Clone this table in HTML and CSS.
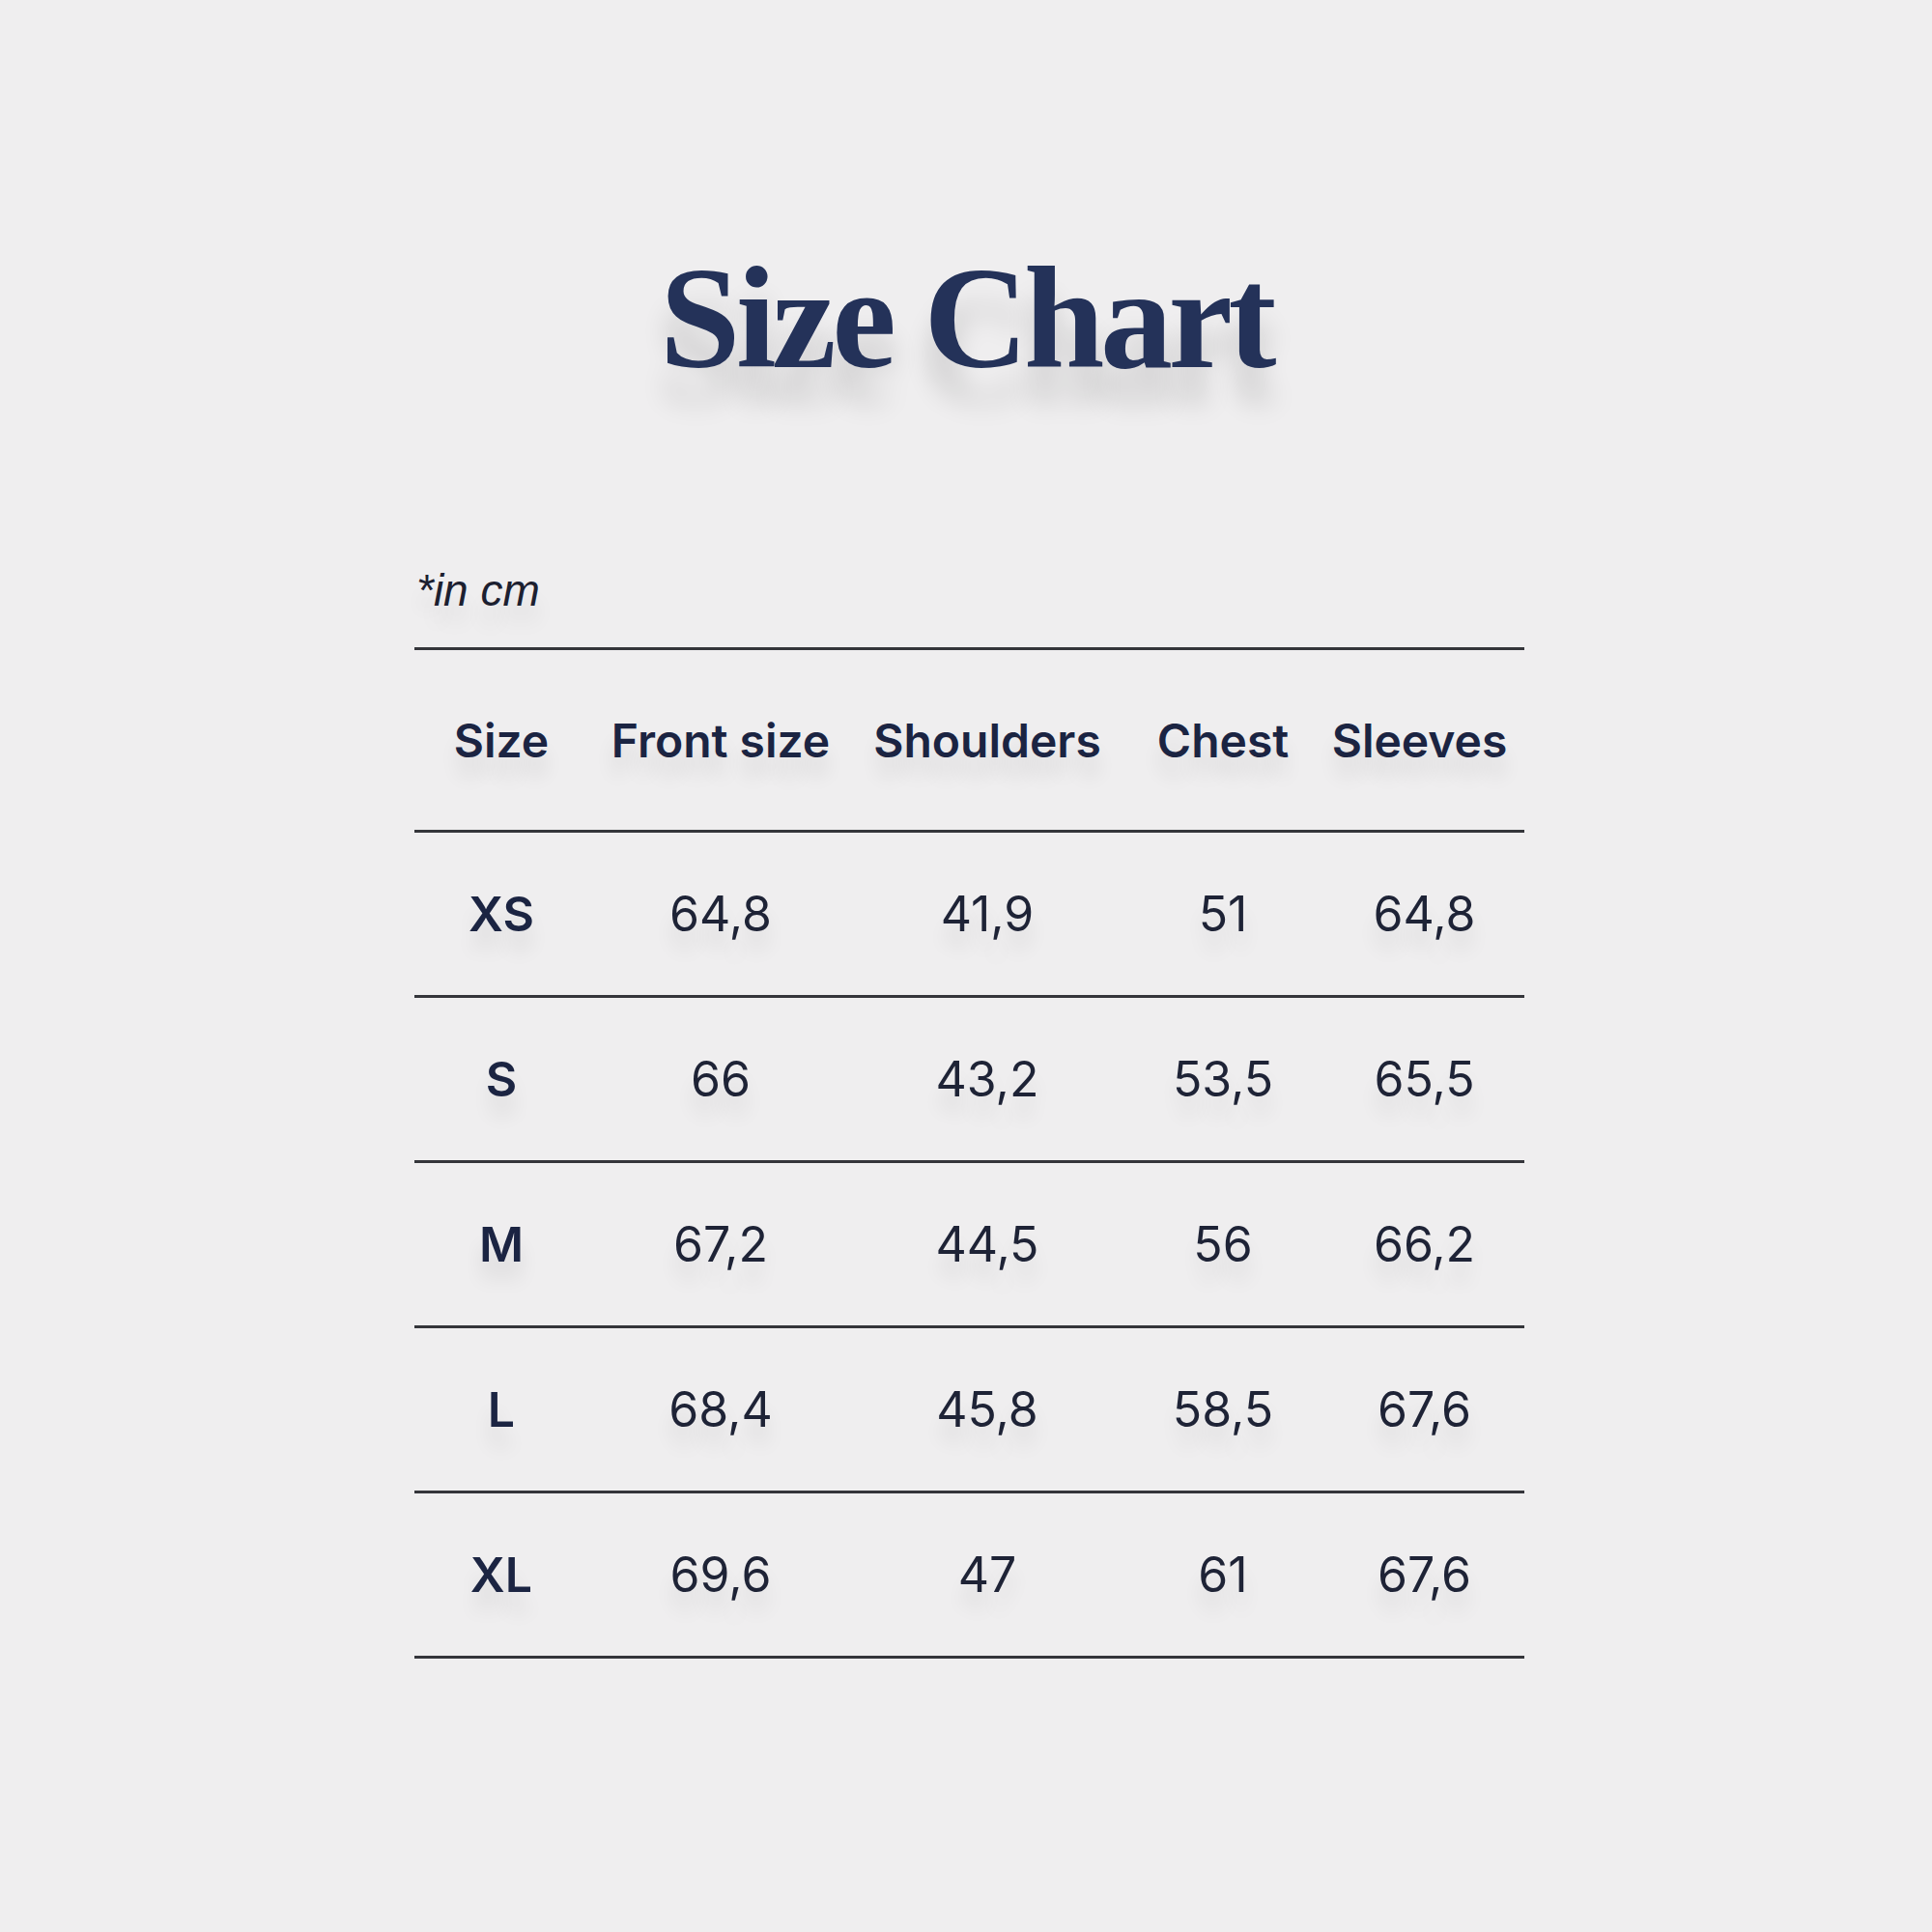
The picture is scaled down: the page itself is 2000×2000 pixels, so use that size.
FILE: index.html
```html
<!DOCTYPE html>
<html>
<head>
<meta charset="utf-8">
<link rel="stylesheet" href="styles.css">
</head>
<body>
<main class="page">
  <h1 class="title">Size Chart</h1>
  <section class="chart">
    <p class="note">*in cm</p>
    <div class="table">
      <div class="row head">
        <div class="cell">Size</div>
        <div class="cell">Front size</div>
        <div class="cell">Shoulders</div>
        <div class="cell">Chest</div>
        <div class="cell">Sleeves</div>
      </div>
      <div class="row">
        <div class="cell size">XS</div>
        <div class="cell">64,8</div>
        <div class="cell">41,9</div>
        <div class="cell">51</div>
        <div class="cell">64,8</div>
      </div>
      <div class="row">
        <div class="cell size">S</div>
        <div class="cell">66</div>
        <div class="cell">43,2</div>
        <div class="cell">53,5</div>
        <div class="cell">65,5</div>
      </div>
      <div class="row">
        <div class="cell size">M</div>
        <div class="cell">67,2</div>
        <div class="cell">44,5</div>
        <div class="cell">56</div>
        <div class="cell">66,2</div>
      </div>
      <div class="row">
        <div class="cell size">L</div>
        <div class="cell">68,4</div>
        <div class="cell">45,8</div>
        <div class="cell">58,5</div>
        <div class="cell">67,6</div>
      </div>
      <div class="row last">
        <div class="cell size">XL</div>
        <div class="cell">69,6</div>
        <div class="cell">47</div>
        <div class="cell">61</div>
        <div class="cell">67,6</div>
      </div>
    </div>
  </section>
</main>
</body>
</html>
```
FILE: styles.css
```css
html, body {
  margin: 0;
  padding: 0;
  background: #efeeef;
}
body {
  width: 2000px;
  height: 2000px;
  font-family: Inter, "Liberation Sans", sans-serif;
  color: #1d2540;
}
.page {
  display: flex;
  flex-direction: column;
  align-items: center;
  padding-top: 254px;
}
.title {
  margin: 0;
  font-family: "Liberation Serif", serif;
  font-weight: 700;
  font-size: 150px;
  line-height: 150px;
  letter-spacing: -4.5px;
  color: #243259;
  text-shadow: 0 36px 28px rgba(0, 0, 0, 0.14);
}
.chart {
  width: 1149px;
  margin-top: 184px;
  margin-left: 7px;
}
.note {
  margin: 0 0 36px 2px;
  font-family: "Liberation Sans", Arial, sans-serif;
  font-style: italic;
  font-size: 46px;
  line-height: 46px;
  color: #1c2030;
  text-shadow: 0 20px 20px rgba(0, 0, 0, 0.09);
}
.table {
  display: flex;
  flex-direction: column;
}
.row {
  display: grid;
  grid-template-columns: 180px 274px 278px 210px 207px;
  align-items: center;
  height: 168px;
  border-top: 3px solid #34353a;
}
.row.head {
  height: 186px;
}
.row.last {
  border-bottom: 3px solid #34353a;
}
.cell {
  text-align: center;
  font-size: 50px;
  font-weight: 400;
  color: #1e2336;
  text-shadow: 0 20px 20px rgba(0, 0, 0, 0.09);
}
.head .cell {
  font-size: 48px;
  font-weight: 600;
  color: #1b2442;
}
.head .cell:last-child {
  padding-right: 10px;
}
.cell.size {
  font-weight: 600;
  color: #1b2442;
}
```
